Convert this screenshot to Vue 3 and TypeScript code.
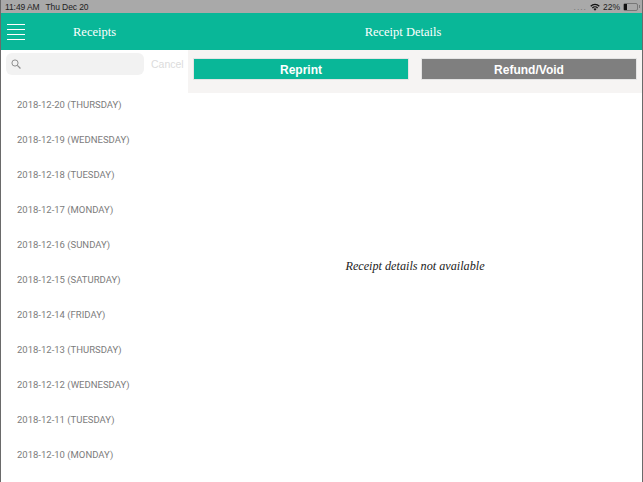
<script setup lang="ts">
const dates: string[] = [
  '2018-12-20 (THURSDAY)',
  '2018-12-19 (WEDNESDAY)',
  '2018-12-18 (TUESDAY)',
  '2018-12-17 (MONDAY)',
  '2018-12-16 (SUNDAY)',
  '2018-12-15 (SATURDAY)',
  '2018-12-14 (FRIDAY)',
  '2018-12-13 (THURSDAY)',
  '2018-12-12 (WEDNESDAY)',
  '2018-12-11 (TUESDAY)',
  '2018-12-10 (MONDAY)',
]
</script>

<template>
  <div class="screen">
    <div class="status">
      <span class="time">11:49 AM</span>
      <span class="day">Thu Dec 20</span>
      <span class="dots">....</span>
      <svg class="wifi" width="10" height="8" viewBox="0 0 12 9">
        <path d="M0.3 3 A8 8 0 0 1 11.7 3 L10.6 4.2 A6.4 6.4 0 0 0 1.4 4.2 Z" fill="#111" />
        <path d="M2.3 5 A5.2 5.2 0 0 1 9.7 5 L8.6 6.2 A3.6 3.6 0 0 0 3.4 6.2 Z" fill="#111" />
        <path d="M4.2 7 A2.6 2.6 0 0 1 7.8 7 L6 8.9 Z" fill="#111" />
      </svg>
      <span class="pct">22%</span>
      <span class="battery"><span class="level"></span></span>
      <span class="nub"></span>
    </div>
    <header class="nav">
      <div class="nav-left">
        <div class="burger"><i></i><i></i><i></i><i></i></div>
        <span class="nav-title">Receipts</span>
      </div>
      <div class="nav-right">Receipt Details</div>
    </header>
    <div class="body">
      <aside class="side">
        <div class="search-row">
          <div class="search">
            <svg width="10" height="10" viewBox="0 0 11 11" fill="none" stroke="#8e8e8e" stroke-width="1.1">
              <circle cx="4.4" cy="4.4" r="3.4" />
              <path d="M7 7 L10.4 10.4" stroke-width="1.4" />
            </svg>
          </div>
          <span class="cancel">Cancel</span>
        </div>
        <ul class="dates">
          <li v-for="d in dates" :key="d">{{ d }}</li>
        </ul>
      </aside>
      <main class="detail">
        <div class="actions">
          <button class="btn reprint">Reprint</button>
          <button class="btn refund">Refund/Void</button>
        </div>
        <div class="empty">Receipt details not available</div>
      </main>
    </div>
  </div>
</template>

<style>
html, body { margin: 0; background: #fff; }
</style>

<style scoped>
.screen {
  width: 643px;
  height: 482px;
  overflow: hidden;
  display: flex;
  flex-direction: column;
  box-sizing: border-box;
  border-left: 1px solid #6a6a6a;
  border-right: 1px solid #6a6a6a;
  font-family: "Liberation Sans", Arial, sans-serif;
}
.status {
  height: 13px;
  background: #a9a9a9;
  margin: 0 -1px;
  padding: 0 3px 0 5px;
  display: flex;
  align-items: center;
  font-size: 8.5px;
  color: #222;
  flex: none;
}
.time { margin-right: 6px; letter-spacing: -0.1px; }
.day { letter-spacing: -0.1px; }
.dots { margin-left: auto; margin-right: 3px; color: #777; letter-spacing: 1px; }
.wifi { margin-right: 3px; }
.pct { margin-right: 3px; }
.battery {
  width: 13px;
  height: 6px;
  border: 1px solid #777;
  border-radius: 2px;
  display: block;
}
.level { display: block; width: 3px; height: 6px; background: #111; }
.nub { width: 1px; height: 3px; background: #777; margin-left: 1px; }
.nav {
  height: 37px;
  flex: none;
  background: #09b798;
  display: flex;
  color: #fff;
  font-family: "Liberation Serif", serif;
  font-size: 12.5px;
}
.nav-left {
  width: 188px;
  display: flex;
  align-items: center;
  padding: 1px 0 0 6px;
  box-sizing: border-box;
}
.burger {
  width: 18px;
  height: 16px;
  display: flex;
  flex-direction: column;
  justify-content: space-between;
  margin-right: 48px;
}
.burger i { display: block; height: 1px; background: #fff; }
.nav-right {
  flex: 1;
  display: flex;
  align-items: center;
  justify-content: center;
  padding: 1px 25px 0 0;
}
.body { flex: 1; display: flex; min-height: 0; }
.side { width: 187px; flex: none; }
.search-row { display: flex; align-items: center; padding: 3px 0 0 5px; }
.search {
  width: 138px;
  height: 22px;
  background: #f2f2f2;
  border-radius: 6px;
  display: flex;
  align-items: center;
  padding-left: 5px;
  box-sizing: border-box;
}
.cancel { margin-left: 7px; font-size: 10.5px; color: #dcdcdc; }
.dates {
  list-style: none;
  margin: 0;
  padding: 0;
}
.dates li {
  height: 35px;
  line-height: 35px;
  padding-left: 16px;
  font-family: Roboto, "Liberation Sans", sans-serif;
  font-size: 9.5px;
  color: #7c7c7c;
}
.dates li:first-child { margin-top: 12px; }
.detail { flex: 1; display: flex; flex-direction: column; }
.actions {
  height: 43px;
  flex: none;
  background: #f6f4f3;
  display: flex;
  gap: 12px;
  padding: 8px 4px 0 5px;
  box-sizing: border-box;
}
.btn {
  width: 216px;
  height: 22px;
  border: 1px solid #e4e4e4;
  padding: 1px 0 0;
  font-family: "Liberation Sans", Arial, sans-serif;
  font-weight: 700;
  font-size: 12px;
  color: #fff;
}
.reprint { background: #09b798; }
.refund { background: #7f7f7f; }
.empty {
  flex: 1;
  display: flex;
  align-items: center;
  justify-content: center;
  padding-bottom: 42px;
  font-family: "Liberation Serif", serif;
  font-style: italic;
  font-size: 12.2px;
  color: #222;
}
</style>
